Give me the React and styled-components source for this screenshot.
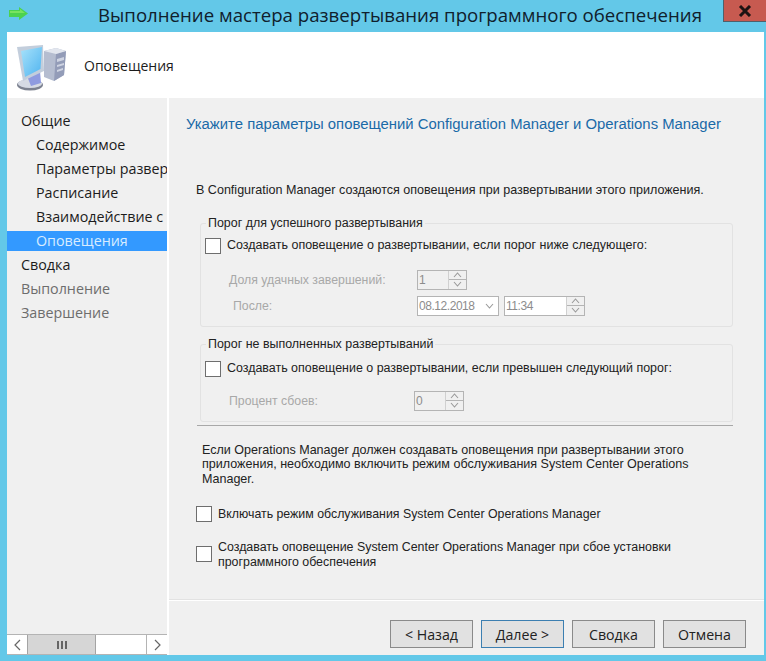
import styled, { createGlobalStyle } from "styled-components"

const GlobalStyle = createGlobalStyle`
    html, body {
        margin: 0;
        padding: 0;
        background: #63c8e8;
    }
    #root {
        width: 766px;
        height: 661px;
        overflow: hidden;
    }
`

const Win = styled.div`
    width: 766px;
    height: 661px;
    background: #63c8e8;
    display: flex;
    flex-direction: column;
    font-family: "Liberation Sans", Arial, sans-serif;
`
const TitleBar = styled.div`
    height: 32px;
    flex: none;
    display: flex;
    align-items: flex-start;
    .arrow { margin: 7px 0 0 8px; flex: none; }
    .title {
        flex: 1;
        padding-left: 48px;
        text-align: center;
        font-family: "Open Sans", sans-serif;
        font-size: 18.65px;
        line-height: 30px;
        color: #10202c;
        white-space: nowrap;
    }
`
const CloseBtn = styled.div`
    width: 43px;
    height: 22px;
    flex: none;
    background: #c75a50;
    border-left: 1px solid #50606a;
    border-bottom: 1px solid #50606a;
    box-sizing: border-box;
    display: flex;
    align-items: center;
    justify-content: center;
`
const Body = styled.div`
    flex: 1;
    margin: 0 2px 6px 7px;
    display: flex;
    flex-direction: column;
    background: #fff;
    min-height: 0;
`
const Header = styled.div`
    height: 66px;
    flex: none;
    display: flex;
    align-items: center;
    gap: 18px;
    padding-left: 9px;
    font-family: "Open Sans", sans-serif;
    font-size: 14px;
    color: #1c1c1c;
`
const Main = styled.div`
    flex: 1;
    display: flex;
    gap: 2px;
    min-height: 0;
`
const Side = styled.div`
    width: 160px;
    flex: none;
    background: #f0f0f0;
    display: flex;
    flex-direction: column;
    justify-content: space-between;
    overflow: hidden;
    padding-top: 11px;
`
const NavItem = styled.div`
    height: ${p => p.$active ? "20px" : "24px"};
    margin: ${p => p.$active ? "2px 0" : "0"};
    line-height: ${p => p.$active ? "20px" : "24px"};
    padding-left: ${p => p.$sub ? "29px" : "14px"};
    font-family: "Open Sans", sans-serif;
    font-size: 14.3px;
    white-space: nowrap;
    overflow: hidden;
    background: ${p => p.$active ? "#3399ff" : "transparent"};
    color: ${p => p.$active ? "#d8ecff" : p.$muted ? "#6d6d6d" : "#1c1c1c"};
`
const ScrollBar = styled.div`
    height: 21px;
    flex: none;
    display: flex;
    background: #fff;
    border-top: 1px solid #b4b4b4;
    border-bottom: 1px solid #b4b4b4;
    box-sizing: border-box;
    .track { flex: 1; }
`
const ScrollArrow = styled.div`
    width: 20px;
    flex: none;
    display: flex;
    align-items: center;
    justify-content: center;
    background: #fff;
    border-left: ${p => p.$right ? "1px solid #b4b4b4" : "none"};
`
const Thumb = styled.div`
    width: 67px;
    flex: none;
    background: #d6d6d6;
    border-left: 1px solid #a4a4a4;
    border-right: 1px solid #a4a4a4;
    display: flex;
    align-items: center;
    justify-content: center;
    gap: 2px;
    i {
        width: 2px;
        height: 8px;
        background: #666;
    }
`
const Panel = styled.div`
    flex: 1;
    background: #f0f0f0;
    display: flex;
    flex-direction: column;
    min-width: 0;
`
const Content = styled.div`
    flex: 1;
    padding: 17px 0 0 17px;
    min-height: 0;
    border-bottom: 1px solid #e2e2e2;
`
const Heading = styled.div`
    font-size: 14.87px;
    line-height: 18px;
    color: #1a6aa8;
    white-space: nowrap;
`
const Para = styled.div`
    font-size: 12.55px;
    line-height: 14.5px;
    color: #222;
    margin: ${p => p.$m};
    width: ${p => p.$w || "auto"};
`
const Group = styled.fieldset`
    margin: ${p => p.$m};
    padding: 0 0 0 4px;
    width: 533px;
    height: ${p => p.$h}px;
    box-sizing: border-box;
    border: 1px solid #e2e2e2;
    border-radius: 3px;
    min-width: 0;
    legend {
        font-size: 12.45px;
        line-height: 13px;
        padding: 0 2px;
        margin-left: 1px;
        color: #222;
    }
`
const CheckRow = styled.div`
    display: flex;
    align-items: ${p => p.$top ? "flex-start" : "center"};
    gap: 6px;
    font-size: ${p => p.$fs || 12.5}px;
    line-height: 15px;
    color: #222;
    margin: ${p => p.$m || "0"};
`
const Box = styled.span`
    width: 16px;
    height: 16px;
    flex: none;
    box-sizing: border-box;
    background: #fff;
    border: 1px solid #6e6e6e;
    margin-top: ${p => p.$mt || 0}px;
`
const WrapText = styled.span`
    width: ${p => p.$w}px;
    font-size: 12.42px;
`
const FieldRow = styled.div`
    display: flex;
    align-items: center;
    margin: ${p => p.$m || "0"};
    height: 20px;
`
const FieldLabel = styled.span`
    width: ${p => p.$w}px;
    padding-left: ${p => p.$pl || 0}px;
    box-sizing: border-box;
    flex: none;
    font-size: 12.3px;
    color: #a8a8a8;
`
const Spin = styled.div`
    width: ${p => p.$w}px;
    height: 20px;
    margin-left: ${p => p.$ml || 0}px;
    flex: none;
    box-sizing: border-box;
    border: 1px solid #b4b4b4;
    background: ${p => p.$white ? "#fff" : "#f0f0f0"};
    display: flex;
    align-items: stretch;
    font-size: 12px;
    letter-spacing: -0.45px;
    color: #8c8c8c;
    line-height: 18px;
    span { flex: 1; padding-left: 1px; }
`
const SpinBtns = styled.div`
    width: 17px;
    flex: none;
    display: flex;
    flex-direction: column;
    border-left: 1px solid #d0d0d0;
    background: #f0f0f0;
    div {
        flex: 1;
        display: flex;
        align-items: center;
        justify-content: center;
    }
    div + div { border-top: 1px solid #b4b4b4; }
`
const DateBox = styled(Spin)`
    svg { align-self: center; margin-right: 4px; }
`
const Rule = styled.div`
    width: 536px;
    height: 1px;
    background: #a8a8a8;
    margin: 3px 0 0 11px;
`
const Footer = styled.div`
    height: 55px;
    flex: none;
    border-top: 1px solid #fff;
    display: flex;
    justify-content: flex-end;
    gap: 8px;
    padding: 19px 18px 0 0;
    box-sizing: border-box;
`
const Button = styled.button`
    width: 83px;
    height: 28px;
    box-sizing: border-box;
    padding: 0;
    background: #e1e1e1;
    border: 1px solid ${p => p.$primary ? "#3c7fb1" : "#8a8a8a"};
    font-family: "Open Sans", sans-serif;
    font-size: 14.2px;
    color: #222;
`

const Chevron = ({ up }) => (
    <svg width="9" height="6" viewBox="0 0 9 6">
        <path d={up ? "M1 5 L4.5 1 L8 5" : "M1 1 L4.5 5 L8 1"} fill="none" stroke="#9a9a9a" strokeWidth="1.1" />
    </svg>
)

const Spinner = ({ w, value, ml, white }) => (
    <Spin $w={w} $ml={ml} $white={white}>
        <span>{value}</span>
        <SpinBtns>
            <div><Chevron up /></div>
            <div><Chevron /></div>
        </SpinBtns>
    </Spin>
)

const BackArrow = () => (
    <svg className="arrow" width="21" height="14" viewBox="0 0 21 14">
        <path d="M1 3 H11 V0 L20 6.5 L11 13 V10 H1 Z" fill="#4cd24e" />
        <path d="M2 4 H12 V2 L17 6 H2 Z" fill="#78e45e" />
    </svg>
)

const ComputerIcon = () => (
    <svg width="50" height="52" viewBox="0 0 50 52">
        <defs>
            <linearGradient id="screen" x1="0" y1="0" x2="1" y2="1">
                <stop offset="0" stopColor="#a8e2fa" />
                <stop offset="1" stopColor="#4fb4f0" />
            </linearGradient>
        </defs>
        {/* tower */}
        <path d="M28 12 L40 9 L50 12 L48 36 L38 42 L28 38 Z" fill="#b5bdd0" />
        <path d="M40 15 L50 12 L48 36 L38 42 Z" fill="#939cb8" />
        <path d="M28 12 L40 9 L50 12 L40 15 Z" fill="#e2e6ee" />
        <path d="M41 20 L48 18 V21 L41 23 Z M41 26 L48 24 V26 L41 28 Z M41 31 L47 29 V31 L41 33 Z" fill="#cfd4e2" />
        {/* stand */}
        <ellipse cx="14" cy="46" rx="13" ry="5.5" fill="#7d8290" />
        <ellipse cx="14" cy="44.5" rx="12" ry="4.5" fill="#d6dae4" />
        <path d="M11 37 L24 32 L25 44 L15 47 Z" fill="#8f9be0" />
        {/* monitor */}
        <path d="M1 8 L27 6 L28 32 L7 42 Z" fill="#c3cedc" />
        <path d="M5 12 L26 8 L24.5 30 L9 38 Z" fill="url(#screen)" />
    </svg>
)

const App = () => {
    return (
        <Win>
            <GlobalStyle />
            <TitleBar>
                <BackArrow />
                <div className="title">Выполнение мастера развертывания программного обеспечения</div>
                <CloseBtn>
                    <svg width="14" height="12" viewBox="0 0 14 12">
                        <path d="M2 1 L12 11 M12 1 L2 11" stroke="#1c1212" strokeWidth="3" />
                    </svg>
                </CloseBtn>
            </TitleBar>
            <Body>
                <Header>
                    <ComputerIcon />
                    <span>Оповещения</span>
                </Header>
                <Main>
                    <Side>
                        <div>
                            <NavItem>Общие</NavItem>
                            <NavItem $sub>Содержимое</NavItem>
                            <NavItem $sub>Параметры развертывания</NavItem>
                            <NavItem $sub>Расписание</NavItem>
                            <NavItem $sub>Взаимодействие с пользователем</NavItem>
                            <NavItem $sub $active>Оповещения</NavItem>
                            <NavItem>Сводка</NavItem>
                            <NavItem $muted>Выполнение</NavItem>
                            <NavItem $muted>Завершение</NavItem>
                        </div>
                        <ScrollBar>
                            <ScrollArrow>
                                <svg width="7" height="12" viewBox="0 0 7 12"><path d="M6 1 L1 6 L6 11" fill="none" stroke="#666" strokeWidth="1.2" /></svg>
                            </ScrollArrow>
                            <Thumb><i /><i /><i /></Thumb>
                            <div className="track" />
                            <ScrollArrow $right>
                                <svg width="7" height="12" viewBox="0 0 7 12"><path d="M1 1 L6 6 L1 11" fill="none" stroke="#666" strokeWidth="1.2" /></svg>
                            </ScrollArrow>
                        </ScrollBar>
                    </Side>
                    <Panel>
                        <Content>
                            <Heading>Укажите параметры оповещений Configuration Manager и Operations Manager</Heading>
                            <Para $m="50px 0 0 10px">В Configuration Manager создаются оповещения при развертывании этого приложения.</Para>
                            <Group $m="19px 0 0 14px" $h={110}>
                                <legend>Порог для успешного развертывания</legend>
                                <CheckRow $m="8px 0 0 0">
                                    <Box />
                                    Создавать оповещение о развертывании, если порог ниже следующего:
                                </CheckRow>
                                <FieldRow $m="16px 0 0 0">
                                    <FieldLabel $w={212} $pl={24}>Доля удачных завершений:</FieldLabel>
                                    <Spinner w={50} value="1" />
                                </FieldRow>
                                <FieldRow $m="6px 0 0 0">
                                    <FieldLabel $w={212} $pl={28}>После:</FieldLabel>
                                    <DateBox $w={82} $white>
                                        <span>08.12.2018</span>
                                        <Chevron />
                                    </DateBox>
                                    <Spinner w={81} value="11:34" ml={5} white />
                                </FieldRow>
                            </Group>
                            <Group $m="11px 0 0 14px" $h={84}>
                                <legend>Порог не выполненных развертываний</legend>
                                <CheckRow $m="10px 0 0 0" $fs={12.45}>
                                    <Box />
                                    Создавать оповещение о развертывании, если превышен следующий порог:
                                </CheckRow>
                                <FieldRow $m="14px 0 0 0">
                                    <FieldLabel $w={209} $pl={24}>Процент сбоев:</FieldLabel>
                                    <Spinner w={50} value="0" />
                                </FieldRow>
                            </Group>
                            <Rule />
                            <Para $m="17px 0 0 16px" $w="495px">
                                Если Operations Manager должен создавать оповещения при развертывании этого приложения, необходимо включить режим обслуживания System Center Operations Manager.
                            </Para>
                            <CheckRow $m="20px 0 0 10px" $fs={12.35}>
                                <Box />
                                Включать режим обслуживания System Center Operations Manager
                            </CheckRow>
                            <CheckRow $m="18px 0 0 10px" $top>
                                <Box $mt={6} />
                                <WrapText $w={490}>Создавать оповещение System Center Operations Manager при сбое установки программного обеспечения</WrapText>
                            </CheckRow>
                        </Content>
                        <Footer>
                            <Button>&lt; Назад</Button>
                            <Button $primary>Далее &gt;</Button>
                            <Button>Сводка</Button>
                            <Button>Отмена</Button>
                        </Footer>
                    </Panel>
                </Main>
            </Body>
        </Win>
    )
}

export default App
